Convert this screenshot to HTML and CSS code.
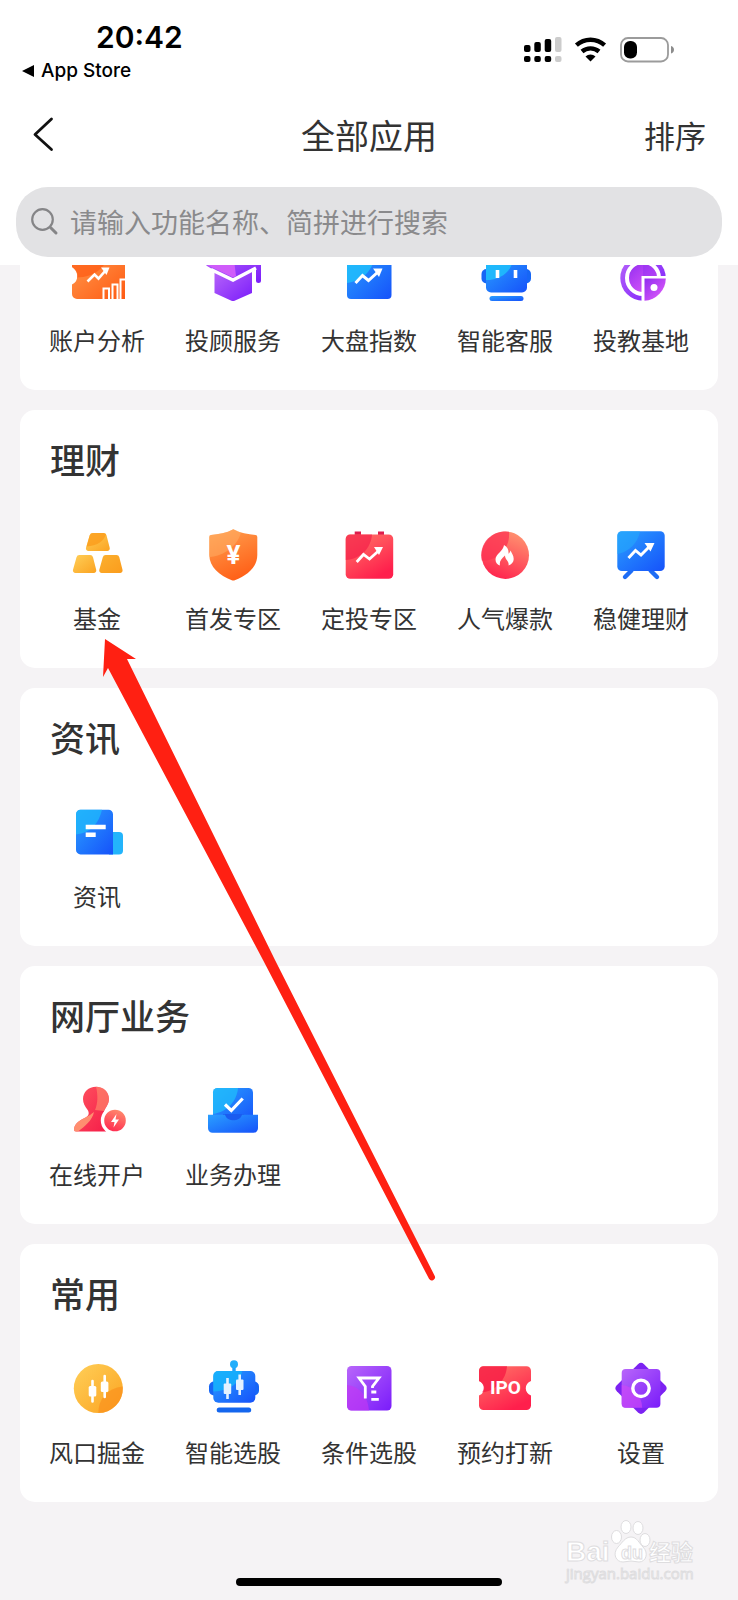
FILE: index.html
```html
<!DOCTYPE html>
<html lang="zh-CN">
<head>
<meta charset="UTF-8" />
<meta name="viewport" content="width=device-width, initial-scale=1" />
<title>全部应用</title>
<link rel="stylesheet" href="styles.css">
</head>
<body>

<!-- shared gradients -->
<svg class="defs" width="0" height="0" aria-hidden="true">
  <defs>
    <linearGradient id="orange" x1="0" y1="0" x2="1" y2="1"><stop offset="0" stop-color="#ff9a4e"/><stop offset="1" stop-color="#ff5a12"/></linearGradient>
    <linearGradient id="shield" x1="0.3" y1="0" x2="0.7" y2="1"><stop offset="0" stop-color="#ff9c4c"/><stop offset="1" stop-color="#ff5c14"/></linearGradient>
    <linearGradient id="gold" x1="0" y1="0" x2="1" y2="1"><stop offset="0" stop-color="#ffcf58"/><stop offset="1" stop-color="#fba321"/></linearGradient>
    <linearGradient id="amber" x1="0" y1="0" x2="1" y2="1"><stop offset="0" stop-color="#fbb02f"/><stop offset="1" stop-color="#fb9c1c"/></linearGradient>
    <linearGradient id="purple" x1="0" y1="0" x2="1" y2="1"><stop offset="0" stop-color="#b866fa"/><stop offset="1" stop-color="#7a1cfa"/></linearGradient>
    <linearGradient id="pink" x1="0" y1="0" x2="1" y2="1"><stop offset="0" stop-color="#8f2cf0"/><stop offset="1" stop-color="#e960fa"/></linearGradient>
    <linearGradient id="blue" x1="0" y1="0" x2="1" y2="1"><stop offset="0" stop-color="#2aa0ff"/><stop offset="1" stop-color="#1652fa"/></linearGradient>
    <linearGradient id="red" x1="0" y1="0" x2="0.6" y2="1"><stop offset="0" stop-color="#ff7a68"/><stop offset="1" stop-color="#ff1f4c"/></linearGradient>
    <linearGradient id="rose" x1="0" y1="0" x2="1" y2="1"><stop offset="0" stop-color="#ff5560"/><stop offset="1" stop-color="#f51b48"/></linearGradient>
    <linearGradient id="peach" x1="0.9" y1="0" x2="0.5" y2="1"><stop offset="0" stop-color="#ff9a72"/><stop offset="1" stop-color="#ff2a50"/></linearGradient>
  </defs>
</svg>

<header class="header">
  <div class="statusbar">
    <div class="status-left">
      <div class="clock">20:42</div>
      <a class="back-app" href="#appstore">
        <svg width="13" height="12" viewBox="0 0 13 12" aria-hidden="true"><path d="M0 6 12 0v12z"/></svg>
        App Store
      </a>
    </div>
    <div class="status-right">
      <svg width="38" height="26" viewBox="0 0 38 26" aria-hidden="true">
        <rect x="0" y="8" width="6.500" height="7" rx="2"/><rect x="10.300" y="5" width="6.500" height="10" rx="2"/><rect x="20.700" y="2" width="6.500" height="13" rx="2"/><rect x="31" y="0" width="6.500" height="15" rx="2" fill="#ccc"/>
        <rect x="0" y="19" width="6.500" height="6" rx="2"/><rect x="10.300" y="19" width="6.500" height="6" rx="2"/><rect x="20.700" y="19" width="6.500" height="6" rx="2"/><rect x="31" y="19" width="6.500" height="6" rx="2" fill="#ccc"/>
      </svg>
      <svg width="34" height="26" viewBox="0 0 34 26" aria-hidden="true">
        <path d="M2.400 8.200a21 21 0 0 1 28.200 0M8 14.500a13 13 0 0 1 17 0" fill="none" stroke="#000" stroke-width="4.400"/>
        <path d="M16.500 24.500 11.500 19.500a7.200 7.200 0 0 1 10 0z"/>
      </svg>
      <svg width="54" height="26" viewBox="0 0 54 26" aria-hidden="true">
        <rect x="1" y="1" width="47" height="23.500" rx="7" fill="none" stroke="#9b9b9b" stroke-width="1.800"/>
        <rect x="4" y="4" width="13" height="17.500" rx="6"/>
        <path d="M51 9c4 1 4 6.500 0 7.500z" fill="#8c8c8c"/>
      </svg>
    </div>
  </div>

  <nav class="navbar">
    <button class="nav-back" type="button" aria-label="返回">
      <svg width="22" height="36" viewBox="0 0 22 36" aria-hidden="true"><path d="M19.500 2 3 17.500 19.500 32.500" fill="none" stroke="#111" stroke-width="2.800" stroke-linecap="round" stroke-linejoin="round"/></svg>
    </button>
    <h1 class="nav-title">全部应用</h1>
    <button class="nav-sort" type="button">排序</button>
  </nav>

  <label class="search">
    <svg width="28" height="28" viewBox="0 0 28 28" aria-hidden="true"><circle cx="11.500" cy="11.500" r="10.300" fill="none" stroke="#858587" stroke-width="2.200"/><path d="M19.500 19.500 25 25" stroke="#858587" stroke-width="3" stroke-linecap="round"/></svg>
    <input type="search" aria-label="搜索功能" placeholder="请输入功能名称、简拼进行搜索">
  </label>
</header>

<main class="list">

  <section class="card card-scrolled">
    <div class="apps">
      <a class="app" href="#zhfx">
        <svg class="icon" viewBox="0 0 56 56" aria-hidden="true">
          <path d="M8 6h43a5 5 0 0 1 5 5v39H8a5 5 0 0 1-5-5v-9.500c7-3 7-13 0-17.500V11a5 5 0 0 1 5-5z" fill="url(#orange)"/>
          <path d="M3 11a5 5 0 0 1 5-5h31c-2 12-13 22-31 22.500 1.500-4-1-8-5-10.500z" fill="#ff5a12" opacity=".7"/>
          <path d="M18.500 32.500 25.500 25.500 29.500 29.500 37 21" fill="none" stroke="#fff" stroke-width="2.600"/>
          <path d="M32 18.500h8.500L37.500 26z" fill="#fff"/>
          <path d="M34.500 50V39.500h5.500V50M43.500 50V35.500h5V50M51.500 50V30.500H56" fill="none" stroke="#fff" stroke-width="2"/>
        </svg>
        <span>账户分析</span>
      </a>
      <a class="app" href="#tgfw">
        <svg class="icon" viewBox="0 0 56 56" aria-hidden="true">
          <path d="M9.500 20 28 30 47 20v24l-18 8h-2L9.500 44z" fill="url(#purple)"/>
          <path d="M0 15 28 3l28 12v16.500a2.500 2.500 0 0 1-5 0V20.500L28 32.500 2 17z" fill="url(#purple)"/>
          <path d="M0 15 28 3 31 27l-3 1.500z" fill="#cf5cfa"/>
          <path d="M6 20.500 28 31 51 19" fill="none" stroke="#fff" stroke-width="3.400"/>
        </svg>
        <span>投顾服务</span>
      </a>
      <a class="app" href="#dpzs">
        <svg class="icon" viewBox="0 0 56 56" aria-hidden="true">
          <rect x="6" y="5" width="44.500" height="45" rx="4" fill="url(#blue)"/>
          <path d="M6 9a4 4 0 0 1 4-4h24C33 20 22 32 6 34z" fill="#1fc0fb" opacity=".8"/>
          <path d="M14.500 34 21.500 26.500 27.500 31.500 38 22" fill="none" stroke="#fff" stroke-width="3"/>
          <path d="M32 19.500h9.500L38 28z" fill="#fff"/>
        </svg>
        <span>大盘指数</span>
      </a>
      <a class="app" href="#znkf">
        <svg class="icon" viewBox="0 0 56 56" aria-hidden="true">
          <rect x="4.500" y="20" width="49.500" height="14.500" rx="5" fill="#1666f5"/>
          <rect x="9" y="10" width="41" height="33.500" rx="5" fill="url(#blue)"/>
          <path d="M9 15a5 5 0 0 1 5-5h22C35 22 24 31 9 31z" fill="#1fc0fb" opacity=".85"/>
          <path d="M20.500 21v8M38.500 21v8" stroke="#fff" stroke-width="3.600"/>
          <rect x="12.500" y="47" width="34" height="5" rx="2.500" fill="url(#blue)"/>
        </svg>
        <span>智能客服</span>
      </a>
      <a class="app" href="#tjjd">
        <svg class="icon" viewBox="0 0 56 56" aria-hidden="true">
          <circle cx="30" cy="29" r="22.700" fill="url(#purple)"/>
          <circle cx="30" cy="29" r="16" fill="url(#pink)" stroke="#fff" stroke-width="4"/>
          <path d="M30 15a14 14 0 0 1 14 14H30z" fill="#8a2cf2" opacity=".4"/>
          <path d="M28.500 27H56v28H28.500z" fill="#fff"/>
          <path d="M31.500 29.500h21.300A22.500 22.500 0 0 1 31.500 51.700z" fill="url(#pink)"/>
          <circle cx="41" cy="38.500" r="3.500" fill="#fff"/>
        </svg>
        <span>投教基地</span>
      </a>
    </div>
  </section>

  <section class="card">
    <h2>理财</h2>
    <div class="apps">
      <a class="app" href="#jj">
        <svg class="icon" viewBox="0 0 56 56" aria-hidden="true">
          <path d="M24 6h10.500a3 3 0 0 1 3 2.200l3.200 12.600a2.500 2.500 0 0 1-2.500 3.200H19.500a2.500 2.500 0 0 1-2.500-3.200l3.700-12.600A3.400 3.400 0 0 1 24 6z" fill="url(#gold)"/>
          <path d="M24 6h10.500a3 3 0 0 1 2.500 1.500C35 14 28 19 17.600 19.500l3.100-11.300A3.400 3.400 0 0 1 24 6z" fill="#fb9c1c" opacity=".8"/>
          <path d="M10.500 28H21a3 3 0 0 1 3 2.200l3.200 12.600a2.500 2.500 0 0 1-2.500 3.200H6.500A2.500 2.500 0 0 1 4 42.800l3.500-12.600a3 3 0 0 1 3-2.200z" fill="url(#gold)"/>
          <path d="M36.800 28h10.500a3 3 0 0 1 3 2.200l3.200 12.600A2.500 2.500 0 0 1 51 46H32.800a2.500 2.500 0 0 1-2.500-3.200l3.500-12.600a3 3 0 0 1 3-2.200z" fill="url(#amber)"/>
        </svg>
        <span>基金</span>
      </a>
      <a class="app" href="#sfzq">
        <svg class="icon" viewBox="0 0 56 56" aria-hidden="true">
          <path d="M28.300 2.300C35 6 43 7.500 50.500 8a2 2 0 0 1 1.800 2v18c0 12-10 20.500-22.500 25.300a4 4 0 0 1-3 0C14.500 48.500 4.300 40 4.300 28V10a2 2 0 0 1 1.800-2C13.500 7.500 21.500 6 28.300 2.300z" fill="url(#shield)"/>
          <path d="M28.300 2.300 36 5.500C33 18 20 29 4.300 30V10a2 2 0 0 1 1.800-2C13.500 7.500 21.500 6 28.300 2.300z" fill="#ffb068" opacity=".5"/>
          <text x="28.500" y="37" class="yen">¥</text>
        </svg>
        <span>首发专区</span>
      </a>
      <a class="app" href="#dtzq">
        <svg class="icon" viewBox="0 0 56 56" aria-hidden="true">
          <path d="M13.700 4.500H20V10h-6.300zM37 4.500h6V10h-6z" fill="#dd1d4c"/>
          <rect x="4.700" y="7.500" width="47.500" height="44.200" rx="4.500" fill="url(#red)"/>
          <path d="M4.700 12a4.500 4.500 0 0 1 4.500-4.500H31C30 21 20 32 4.700 33z" fill="#f51b48" opacity=".65"/>
          <path d="M15.700 35 22.500 27.500 28.500 32 38.500 23" fill="none" stroke="#fff" stroke-width="2.800"/>
          <path d="M33 20h9l-4 8z" fill="#fff"/>
        </svg>
        <span>定投专区</span>
      </a>
      <a class="app" href="#rqbk">
        <svg class="icon" viewBox="0 0 56 56" aria-hidden="true">
          <circle cx="28.300" cy="28.200" r="23.700" fill="url(#peach)"/>
          <path d="M32 4.800A23.700 23.700 0 0 0 4.800 33.500C20 34 33.500 22 32 4.800z" fill="#fc3353" opacity=".75"/>
          <path d="M27 18c-.5 6-8.500 9-8.500 14.500 0 3.200 2 5.200 4.500 6-1-4 1.500-7 5-10 0 4.500 4.500 5.500 3.500 10 3-1 5.200-3.200 5.200-6.500 0-3.600-2-5.500-3.200-8.500-.6 1.700-1 2.600-2 3.300.3-3.800-1-7-4.500-8.800z" fill="#fff"/>
        </svg>
        <span>人气爆款</span>
      </a>
      <a class="app" href="#wjlc">
        <svg class="icon" viewBox="0 0 56 56" aria-hidden="true">
          <path d="M18.500 43.500 12 50M37.500 43.500 44 50" stroke="#1e6df5" stroke-width="4.400" stroke-linecap="round"/>
          <rect x="4.300" y="4.300" width="47.400" height="39.700" rx="4.500" fill="url(#blue)"/>
          <path d="M4.300 8.800a4.500 4.500 0 0 1 4.500-4.500H27C25 16 16 25 4.300 27z" fill="#25a8fb" opacity=".6"/>
          <path d="M15.500 31 22.500 23.500 28 28 37.500 18.500" fill="none" stroke="#fff" stroke-width="2.900"/>
          <path d="M31.500 16h10l-4 8.500z" fill="#fff"/>
        </svg>
        <span>稳健理财</span>
      </a>
    </div>
  </section>

  <section class="card">
    <h2>资讯</h2>
    <div class="apps">
      <a class="app" href="#zx">
        <svg class="icon" viewBox="0 0 56 56" aria-hidden="true">
          <path d="M40 27h10a4 4 0 0 1 4 4v14.500a4 4 0 0 1-4 4H40z" fill="#23b4fb"/>
          <path d="M11.500 4.700h28a4.500 4.500 0 0 1 4.500 4.500V49.400H11.500A4.500 4.500 0 0 1 7 45V9.200a4.500 4.500 0 0 1 4.500-4.500z" fill="url(#blue)"/>
          <path d="M11.500 4.700H33C30 18 22 28 7 29.500V9.200a4.500 4.500 0 0 1 4.500-4.500z" fill="#1fb8fb" opacity=".75"/>
          <path d="M16.700 22h20M16.700 29.700h10" stroke="#fff" stroke-width="4.600"/>
        </svg>
        <span>资讯</span>
      </a>
    </div>
  </section>

  <section class="card">
    <h2>网厅业务</h2>
    <div class="apps">
      <a class="app" href="#zxkh">
        <svg class="icon" viewBox="0 0 56 56" aria-hidden="true">
          <path d="M27 3.700c7.500 0 13 5.300 13 12.300 0 6-4.500 9-5.500 14.500C33.500 37 34 43 37 48.500H7a2 2 0 0 1-2-2.200c.5-6.500 7-9.300 12-12 3-1.600 3.500-4.500 1.500-7.500C16 23 14 20.500 14 16 14 9 19.500 3.700 27 3.700z" fill="url(#rose)"/>
          <path d="M27 3.700c7.500 0 13 5.300 13 12.300 0 5-3.500 8.500-5 12L26 27C29 20 29 12 27 3.700z" fill="#ff8b6c" opacity=".65"/>
          <path d="M25 29c-2 9-9 14-16 19.500H7a2 2 0 0 1-2-2.200c.5-6.500 7-9.300 12-12 3-1.600 5-3 8-5.300z" fill="#ff9d74" opacity=".85"/>
          <circle cx="46" cy="37.500" r="12.500" fill="url(#peach)" stroke="#fff" stroke-width="3.400"/>
          <path d="M47.500 31 42 39h3.500l-1 5.500 5.500-8h-3.500z" fill="#fff"/>
        </svg>
        <span>在线开户</span>
      </a>
      <a class="app" href="#ywbl">
        <svg class="icon" viewBox="0 0 56 56" aria-hidden="true">
          <path d="M12.500 5h31A4.500 4.500 0 0 1 48 9.500V40H8V9.500A4.500 4.500 0 0 1 12.500 5z" fill="url(#blue)"/>
          <path d="M12.500 5H33C32 18 22 29 8 31V9.500A4.500 4.500 0 0 1 12.500 5z" fill="#1fc0fb" opacity=".7"/>
          <path d="M18 31h21v9H18z" fill="#1a5cf0"/>
          <path d="M3 31.700h17c2 7.500 15 7.500 17 0h16v13.500a4.500 4.500 0 0 1-4.500 4.500h-41A4.500 4.500 0 0 1 3 45.200z" fill="url(#blue)"/>
          <path d="M20 21.500 26.300 27.500 37.700 15.500" fill="none" stroke="#fff" stroke-width="3.200"/>
        </svg>
        <span>业务办理</span>
      </a>
    </div>
  </section>

  <section class="card">
    <h2>常用</h2>
    <div class="apps">
      <a class="app" href="#fkjj">
        <svg class="icon" viewBox="0 0 56 56" aria-hidden="true">
          <circle cx="29.300" cy="27.500" r="24.500" fill="url(#gold)"/>
          <path d="M53.800 25.500A24.500 24.500 0 0 1 29.500 52C29 39 38 27 53.800 25.500z" fill="#fb8f1c" opacity=".65"/>
          <path d="M23.500 20v20.500M35.700 15v21" stroke="#fff" stroke-width="2.600" stroke-linecap="round"/>
          <rect x="19.700" y="25" width="7.600" height="10.500" rx="1.500" fill="#fff"/><rect x="31.800" y="20.500" width="7.600" height="10.500" rx="1.500" fill="#fff"/>
        </svg>
        <span>风口掘金</span>
      </a>
      <a class="app" href="#znxg">
        <svg class="icon" viewBox="0 0 56 56" aria-hidden="true">
          <path d="M29 3v9" stroke="#1fa0fb" stroke-width="3.400"/><circle cx="29" cy="3.300" r="4" fill="#22aefb"/>
          <rect x="4" y="20.500" width="50" height="14" rx="5" fill="#1666f5"/>
          <rect x="8.300" y="10" width="42" height="31.700" rx="5" fill="url(#blue)"/>
          <path d="M13.300 10H37C36 21 25 30 8.300 30.500V15a5 5 0 0 1 5-5z" fill="#14b4fb" opacity=".8"/>
          <path d="M22.500 17v21M34.700 13.500V34" stroke="#e4f2ff" stroke-width="2.600"/>
          <rect x="18.700" y="22.500" width="7.500" height="10.500" rx="1" fill="#e4f2ff"/><rect x="31" y="18.500" width="7.500" height="10.500" rx="1" fill="#e4f2ff"/>
          <rect x="11.700" y="46.500" width="34.500" height="5" rx="2.500" fill="#1466ee"/>
        </svg>
        <span>智能选股</span>
      </a>
      <a class="app" href="#tjxg">
        <svg class="icon" viewBox="0 0 56 56" aria-hidden="true">
          <rect x="6" y="5" width="44.500" height="44.500" rx="4.500" fill="url(#purple)"/>
          <path d="M6 24c12 1 21 11 22 25.500H10.500A4.500 4.500 0 0 1 6 45z" fill="#c337f5" opacity=".65"/>
          <path d="M24.300 37.500V25.500L18 17H38L31.500 25.500V27M30.300 31h5M30.300 38.300h7.500" fill="none" stroke="#fff" stroke-width="2.800"/>
        </svg>
        <span>条件选股</span>
      </a>
      <a class="app" href="#yydx">
        <svg class="icon" viewBox="0 0 56 56" aria-hidden="true">
          <path d="M6.500 5.300h43A4.500 4.500 0 0 1 54 9.800V20c-7 3-7 11.500 0 14.500v10a4.500 4.500 0 0 1-4.500 4.500h-43A4.500 4.500 0 0 1 2 44.500v-10c7-3 7-11.500 0-14.500V9.800a4.500 4.500 0 0 1 4.500-4.500z" fill="url(#red)"/>
          <path d="M6.500 5.300H30C29 19 19 30 5 31.500c3-4 2-9-3-11.500V9.800a4.500 4.500 0 0 1 4.500-4.500z" fill="#f81b45" opacity=".8"/>
          <text x="28.500" y="33" class="ipo">IPO</text>
        </svg>
        <span>预约打新</span>
      </a>
      <a class="app" href="#sz">
        <svg class="icon" viewBox="0 0 56 56" aria-hidden="true">
          <path d="M25 3.200a4.300 4.300 0 0 1 6 0L52.200 24.300a4.300 4.300 0 0 1 0 6L31 51.500a4.300 4.300 0 0 1-6 0L3.800 30.300a4.300 4.300 0 0 1 0-6z" fill="#7c22f2"/>
          <rect x="8.700" y="8" width="38.700" height="38.700" rx="4" fill="url(#purple)"/>
          <path d="M8.700 24c11 1 20 10 20.500 22.700H12.700a4 4 0 0 1-4-4z" fill="#d047f8" opacity=".65"/>
          <circle cx="28" cy="27.300" r="8.200" fill="none" stroke="#fff" stroke-width="3.400"/>
        </svg>
        <span>设置</span>
      </a>
    </div>
  </section>

</main>

<footer class="footer">
  <div class="home-indicator"></div>
</footer>

<!-- red pointer towards 基金 -->
<svg class="pointer" width="340" height="650" viewBox="0 0 340 650" aria-hidden="true">
  <path d="M5 4 36 24 27 24 175 325 334.500 640.500a3.200 3.200 0 0 1-5.500 3.300L163 325 8 33 3 42z" fill="#ff2012"/>
</svg>

<svg class="watermark" width="140" height="70" viewBox="0 0 140 70" aria-hidden="true">
  <g fill="#fff" stroke="#dedddf" stroke-width="1">
    <text x="4" y="43" class="wm-brand">Bai</text>
    <ellipse cx="54.500" cy="19" rx="5" ry="6.500"/><ellipse cx="64" cy="9" rx="5" ry="6.500"/><ellipse cx="76" cy="10" rx="5" ry="6.500"/><ellipse cx="83" cy="22" rx="5" ry="6.500"/>
    <path d="M69 19c6 0 8 6 12 10 6 6 3 15-4 15-3 0-5-1-8-1s-5 1-8 1c-7 0-11-8-5-15 4-4 7-10 13-10z"/>
    <text x="59" y="41" class="wm-du">du</text>
    <text x="87" y="42" class="wm-cn">经验</text>
    <text x="4" y="61" class="wm-url">jingyan.baidu.com</text>
  </g>
</svg>

</body>
</html>
```
FILE: styles.css
```css
* { box-sizing: border-box; }
body {
  position: relative;
  display: flex;
  flex-direction: column;
  min-height: 100vh;
  margin: 0;
  background: #f5f3f5;
  color: #333;
  font-family: "Noto Sans CJK SC", sans-serif;
}
a { color: inherit; text-decoration: none; }
button { border: 0; padding: 0; background: none; color: inherit; font: inherit; cursor: pointer; }
svg { display: block; flex: none; }
.defs { position: absolute; }

/* header */
.header { position: relative; z-index: 1; padding-bottom: 8px; background: #fff; }
.statusbar { display: flex; justify-content: space-between; height: 96px; padding: 0 64px 0 22px; color: #000; font-family: Inter, sans-serif; }
.status-left { padding-top: 19px; }
.clock { padding-left: 74px; font-size: 30px; font-weight: 600; line-height: 36px; }
.back-app { display: flex; align-items: center; gap: 6px; margin-top: 5px; font-size: 19px; font-weight: 500; line-height: 22px; }
.status-right { display: flex; align-items: flex-start; gap: 12px; padding-top: 37px; }

.navbar { display: grid; grid-template-columns: 1fr auto 1fr; align-items: center; height: 78px; padding: 0 32px; }
.nav-back { justify-self: start; }
.nav-title { margin: 0; font-size: 34px; font-weight: 400; line-height: 48px; }
.nav-sort { justify-self: end; font-size: 31px; line-height: 48px; }

.search { display: flex; align-items: center; gap: 11px; height: 70px; margin: 13px 16px 0; padding: 0 15px; border-radius: 32px; background: #e2e2e4; }
.search input { flex: 1; min-width: 0; border: 0; padding: 0; outline: 0; background: none; color: #333; font: 27px/40px "Noto Sans CJK SC", sans-serif; }
.search input::placeholder { color: #8a8a8c; }

/* app groups */
.list { display: flex; flex-direction: column; gap: 20px; padding: 0 20px; }
.card { padding: 27px 9px 35px; border-radius: 15px; background: #fff; }
.card h2 { margin: 0 0 46px; padding-left: 21px; font-size: 35px; font-weight: 500; line-height: 44px; }
.card-scrolled { margin-top: -16px; padding-top: 0; }
.apps { display: grid; grid-template-columns: repeat(5, 1fr); }
.app { display: flex; flex-direction: column; align-items: center; gap: 20px; font-size: 24px; line-height: 30px; }
.icon { width: 56px; height: 56px; overflow: visible; }
.yen { fill: #fff; font: 700 26px Roboto, sans-serif; text-anchor: middle; }
.ipo { fill: #fff; font: 700 19px Roboto, sans-serif; text-anchor: middle; }

.footer { display: flex; justify-content: center; margin-top: auto; padding-bottom: 14px; }
.home-indicator { width: 36%; height: 8px; border-radius: 4px; background: #000; }

/* overlays */
.pointer { position: absolute; top: 635px; left: 100px; z-index: 2; }
.watermark { position: absolute; right: 36px; bottom: 12px; }
.wm-brand { font: 700 28px "Liberation Sans", sans-serif; }
.wm-du { font: 700 18px "Liberation Sans", sans-serif; }
.wm-cn { font: 700 22px "Noto Sans CJK SC", sans-serif; }
.wm-url { font: 400 15px "Open Sans", sans-serif; }
```
